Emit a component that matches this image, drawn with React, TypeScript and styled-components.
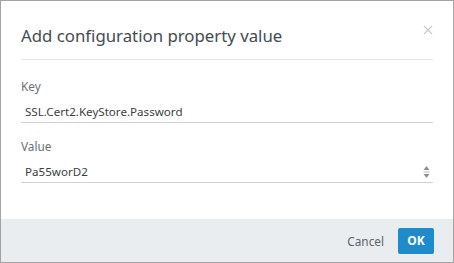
import styled, { createGlobalStyle } from "styled-components";

const GlobalStyle = createGlobalStyle`
  html, body {
    margin: 0;
    padding: 0;
    background: #ffffff;
  }
  body {
    font-family: "Noto Sans", "Open Sans", sans-serif;
  }
`;

export default function App() {
  return (
    <>
      <GlobalStyle />
      <Dialog>
        <Body>
          <Header>
            <Title>Add configuration property value</Title>
            <CloseButton aria-label="Close">
              <svg width="10" height="10" viewBox="0 0 10 10">
                <path d="M1 1 L9 9 M9 1 L1 9" stroke="#c8ccd1" strokeWidth="1.2" />
              </svg>
            </CloseButton>
          </Header>
          <Field $first>
            <Label>Key</Label>
            <InputRow>
              <InputText>SSL.Cert2.KeyStore.Password</InputText>
            </InputRow>
          </Field>
          <Field>
            <Label>Value</Label>
            <InputRow>
              <InputText>Pa55worD2</InputText>
              <Spinner>
                <svg width="7" height="14" viewBox="0 0 7 14">
                  <path d="M3.5 1 L6.5 5 L0.5 5 Z" fill="#8a8f96" />
                  <path d="M0.5 7 H6.5" stroke="#b8bcc2" strokeWidth="1" />
                  <path d="M0.5 9 L6.5 9 L3.5 13 Z" fill="#8a8f96" />
                </svg>
              </Spinner>
            </InputRow>
          </Field>
        </Body>
        <Footer>
          <CancelButton>Cancel</CancelButton>
          <OkButton>OK</OkButton>
        </Footer>
      </Dialog>
    </>
  );
}

const Dialog = styled.div`
  width: 454px;
  height: 263px;
  box-sizing: border-box;
  border: 1px solid #a3a3a3;
  display: flex;
  flex-direction: column;
  background: #ffffff;
`;

const Body = styled.div`
  flex: 1;
  padding: 0 20px;
  display: flex;
  flex-direction: column;
`;

const Header = styled.div`
  position: relative;
  height: 59px;
  box-sizing: border-box;
  padding-top: 12px;
  display: flex;
  align-items: center;
  border-bottom: 1px solid #e1e4e8;
`;

const Title = styled.div`
  font-size: 16.8px;
  line-height: 24px;
  color: #454b52;
`;

const CloseButton = styled.div`
  position: absolute;
  right: 0;
  top: 24px;
  width: 10px;
  height: 10px;
  display: flex;
`;

const Field = styled.div<{ $first?: boolean }>`
  display: flex;
  flex-direction: column;
  margin-top: ${(p) => (p.$first ? "17px" : "14px")};
`;

const Label = styled.div`
  font-size: 11.8px;
  line-height: 18px;
  color: #6b7178;
  margin-bottom: 5px;
`;

const InputRow = styled.div`
  display: flex;
  align-items: center;
  justify-content: space-between;
  height: 23px;
  box-sizing: border-box;
  padding: 2px 4px 0 4px;
  border-bottom: 1px solid #cfd3d8;
`;

const InputText = styled.div`
  font-size: 11.6px;
  line-height: 16px;
  color: #3a3f45;
`;

const Spinner = styled.div`
  display: flex;
  margin-right: -1px;
`;

const Footer = styled.div`
  height: 43px;
  background: #eaedf0;
  display: flex;
  align-items: center;
  justify-content: flex-end;
  gap: 14px;
  padding-right: 19px;
`;

const CancelButton = styled.div`
  font-size: 11.8px;
  color: #5d636a;
`;

const OkButton = styled.div`
  width: 36px;
  height: 26px;
  background: #1e8bcc;
  color: #ffffff;
  font-weight: 700;
  font-size: 12px;
  display: flex;
  align-items: center;
  justify-content: center;
  border-radius: 2px;
`;
